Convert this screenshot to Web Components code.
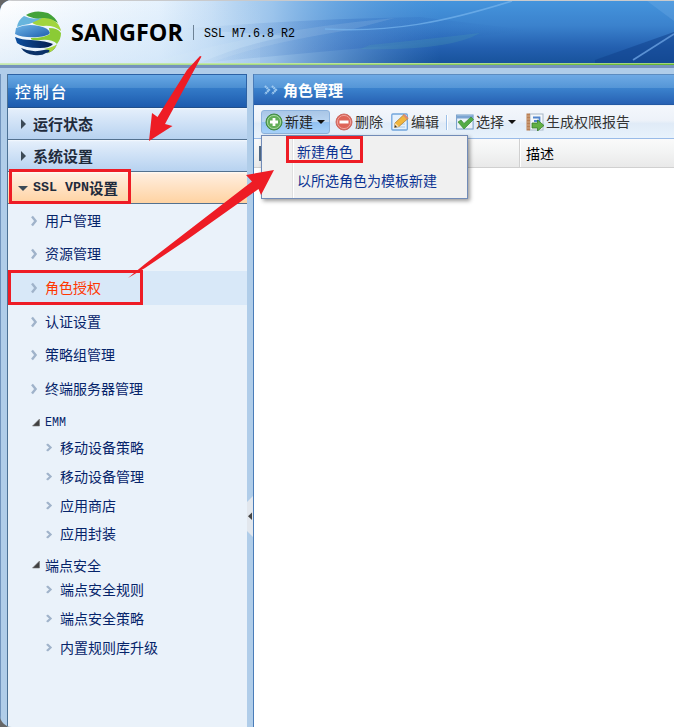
<!DOCTYPE html>
<html lang="zh-CN">
<head>
<meta charset="utf-8">
<title>SSL VPN 控制台</title>
<style>
html,body{margin:0;height:100%;overflow:hidden;background:#666}
body{font:14px "Liberation Sans","Noto Sans CJK SC",sans-serif}
</style>
</head>
<body>
<console-app></console-app>
<script>
const define = (name, html) => customElements.define(name, class extends HTMLElement {
  constructor() {
    super();
    const t = document.createElement('template');
    t.innerHTML = html;
    this.attachShadow({mode: 'open'}).append(t.content.cloneNode(true));
  }
});

define('brand-header', `
<style>
:host{display:block;position:relative;height:68px;box-sizing:border-box;overflow:hidden}
.bg{position:absolute;inset:0;width:674px;height:68px}
.row{position:relative;display:flex;align-items:center;height:64px}
.logo{width:48px;height:46px;margin:1px 0 0 14px;flex:none}
.name{font:bold 23.4px/30px "Open Sans","Noto Sans",sans-serif;color:#000;margin-left:9px;width:113px;white-space:nowrap}
.bar{width:1px;height:15px;background:#6d8296;margin-left:9px}
.ver{font:11.67px/16px "Liberation Mono",monospace;color:#000;margin-left:10px;white-space:pre;margin-top:3px;transform:scaleY(1.12)}
</style>
<svg class="bg" viewBox="0 0 674 68">
<defs>
<linearGradient id="h" x2="0" y2="1"><stop offset="0" stop-color="#4595dd"/><stop offset=".4" stop-color="#3b82cd"/><stop offset=".75" stop-color="#235faf"/><stop offset="1" stop-color="#17529b"/></linearGradient>
<linearGradient id="f" gradientUnits="userSpaceOnUse" x1="0" y1="0" x2="440" y2="0"><stop offset="0" stop-color="#fff"/><stop offset=".36" stop-color="#e6f2fd"/><stop offset=".48" stop-color="#c9e0f6"/><stop offset=".62" stop-color="#a5caee" stop-opacity=".9"/><stop offset=".76" stop-color="#82b3e4" stop-opacity=".6"/><stop offset="1" stop-color="#5a95d5" stop-opacity="0"/></linearGradient>
<linearGradient id="v" x2="0" y2="1"><stop offset="0" stop-color="#b9d6f2" stop-opacity="0"/><stop offset="1" stop-color="#b4d4f3" stop-opacity=".5"/></linearGradient>
<linearGradient id="w" x2="1" y2="0"><stop offset="0" stop-color="#2f6ec2" stop-opacity="0"/><stop offset=".5" stop-color="#2963bc" stop-opacity=".28"/><stop offset="1" stop-color="#2560b4" stop-opacity="0"/></linearGradient>
<linearGradient id="s" x2="1" y2="0"><stop offset="0" stop-color="#b4d4f3" stop-opacity=".5"/><stop offset="1" stop-color="#b4d4f3" stop-opacity="0"/></linearGradient>
<linearGradient id="g" x2="1" y2="0"><stop offset="0" stop-color="#c3e8ae"/><stop offset=".5" stop-color="#9bd66f"/><stop offset="1" stop-color="#66b82f"/></linearGradient>
</defs>
<rect width="674" height="64" fill="url(#h)"/>
<rect width="674" height="64" fill="url(#f)"/>
<rect width="260" height="63" fill="url(#v)" opacity=".7"/>
<path d="M180 29Q300 19 420 17L530 30Q440 42 330 51L200 63Q240 45 290 36Z" fill="url(#w)"/>
<path d="M150 63Q260 30 395 18L350 30Q260 44 210 63Z" fill="#dcecfa" opacity=".12"/>
<path d="M370 45Q420 40 480 33Q450 51 360 49Z" fill="#53a2ae" opacity=".22"/>
<path d="M325 29C390 33 445 22 512 1" fill="none" stroke="#7bb8ef" stroke-width="1.5" opacity=".65"/>
<path d="M595 60L674 32V63H595Z" fill="#10418d" opacity=".55"/>
<path d="M647 1H674V21Z" fill="#80b6ec" opacity=".25"/>
<path d="M633 60L674 34" stroke="#5a91d4" stroke-width="1.7"/>
<rect width="674" height="1" fill="#c9cacc"/>
<rect y="63" width="674" height="1" fill="#d8edcb"/>
<rect y="63.5" width="674" height="1.8" fill="url(#g)"/>
<rect y="65" width="674" height="3" fill="#7593bd"/>
</svg>
<div class="row">
<svg class="logo" viewBox="0 0 48 46">
<defs><linearGradient id="b" x2="1" y2="1"><stop offset="0" stop-color="#6eb6e8"/><stop offset="1" stop-color="#1f5fae"/></linearGradient>
<linearGradient id="n" x2="1" y2="0"><stop offset="0" stop-color="#0b4fa0"/><stop offset="1" stop-color="#061d4d"/></linearGradient></defs>
<path d="M12 5Q21-1 34 3Q41 7 44 13Q35 8 25 9Q17 8 12 5Z" fill="#43a238"/>
<path d="M28 8Q38 7 44 14Q47 19 47 21Q40 15 29 16Q19 15 18 12Q21 9 28 8Z" fill="#a2d53e"/>
<path d="M10 6Q18 10 28 8Q20 12 15 14Q8 15 3 17Q4 10 10 6Z" fill="#67b5dd"/>
<path d="M2 18Q13 13 25 16Q35 18 36 23Q34 26 24 27Q9 28 1 24Z" fill="url(#b)"/>
<path d="M35 18Q44 18 47 23Q47 29 43 34Q38 29 27 30Q16 31 17 28Q30 28 36 24Z" fill="#8bcb35"/>
<path d="M1 27Q8 30 17 30Q33 31 39 34Q36 38 26 38Q9 38 3 33Z" fill="url(#n)"/>
<path d="M7 38Q18 43 30 40Q41 38 43 35Q38 43 32 43Q28 46 20 45Q11 44 7 38Z" fill="#0a3167"/>
<path d="M30 39Q40 37 43 34Q41 41 32 44Q37 41 35 40Z" fill="#a8d63c"/>
</svg>
<span class="name">SANGFOR</span><span class="bar"></span><span class="ver">SSL M7.6.8 R2</span>
</div>`);

define('accordion-row', `
<style>
:host{display:flex;align-items:center;height:31px;border-bottom:1px solid #53718f;background:linear-gradient(#f5f9fe 0,#e3eefb 6%,#b7d2f0);color:#1f2b3c;font-weight:bold;font-size:15px;padding-left:9px;white-space:pre}
svg{width:12px;height:12px;flex:none;margin-right:4px}
:host([open]){background:linear-gradient(#fffaf5 0,#ffeddd 8%,#ffd3a2);font-size:14.5px}
:host([open]) svg{transform:rotate(90deg)}
</style>
<svg viewBox="0 0 12 12"><path d="M4 1L9 6L4 11Z" fill="#3c4a57"/></svg><slot></slot>`);

define('nav-item', `
<style>
:host{display:flex;align-items:center;height:33.6px;padding-left:23px;color:#06246a;white-space:nowrap}
:host([active]){background:#d8e8f8;color:#ff3700}
:host([sub]){height:28.8px;padding-left:38px}
svg{width:7px;height:12px;margin-right:7px;flex:none}
:host([sub]) svg{height:9px}
span{padding-bottom:2px}
</style>
<svg viewBox="0 0 7 12" preserveAspectRatio="none"><path d="M1 1.5L4.6 6L1 10.5" fill="none" stroke="#a0b3ca" stroke-width="2.4"/></svg><span><slot></slot></span>`);

define('nav-group', `
<style>
:host{display:block}
.head{display:flex;align-items:center;height:28px;padding:6px 0 0 24px;box-sizing:border-box;color:#06246a}
:host([late]) .head{height:26.8px;padding-top:5px}
svg{width:9px;height:9px;margin-right:4px;flex:none}
</style>
<div class="head"><svg viewBox="0 0 9 9"><path d="M.5 8L7.5 1V8Z" fill="#404040" stroke="#777" stroke-width=".6"/></svg><slot name="label"></slot></div>
<slot></slot>`);

define('side-panel', `
<style>
:host{display:block;width:240px;box-sizing:border-box;border-left:1px solid #4c7194;background:#eaf2fa;flex:none}
.title{height:34px;box-sizing:border-box;border:1px solid #2d62a4;border-left:0;border-bottom-color:#204f8b;color:#fff;font-weight:500;font-size:16px;letter-spacing:1.8px;display:flex;align-items:center;padding-left:7px;background:linear-gradient(#67a8e5 0,#4c8fd2 39%,#347bc8 41%,#1d5bae)}
.mono{font:11.67px "Liberation Mono",monospace;display:inline-block;transform:scaleY(1.12)}
.b{font-weight:bold;font-size:13.33px;transform:none}
</style>
<div class="title">控制台</div>
<accordion-row>运行状态</accordion-row>
<accordion-row>系统设置</accordion-row>
<accordion-row open><span class="mono b">SSL VPN</span>设置</accordion-row>
<nav-item>用户管理</nav-item>
<nav-item>资源管理</nav-item>
<nav-item active>角色授权</nav-item>
<nav-item>认证设置</nav-item>
<nav-item>策略组管理</nav-item>
<nav-item>终端服务器管理</nav-item>
<nav-group><span slot="label" class="mono">EMM</span>
<nav-item sub>移动设备策略</nav-item><nav-item sub>移动设备管理</nav-item><nav-item sub>应用商店</nav-item><nav-item sub>应用封装</nav-item></nav-group>
<nav-group late><span slot="label">端点安全</span>
<nav-item sub>端点安全规则</nav-item><nav-item sub>端点安全策略</nav-item><nav-item sub>内置规则库升级</nav-item></nav-group>`);

define('panel-splitter', `
<style>
:host{display:flex;width:6px;flex:none;background:#b0cde9;padding-top:422px;box-sizing:border-box;align-items:flex-start}
svg{display:block;width:6px;height:41px}
</style>
<svg viewBox="0 0 6 41"><path d="M6 0L0 6V35L6 41Z" fill="#e2e7ed"/><path d="M5 16.5V24L1 20.3Z" fill="#444"/></svg>`);

define('tool-button', `
<style>
:host{display:flex;align-items:center;height:24px;box-sizing:border-box;color:#333;white-space:nowrap}
:host([pressed]){width:69px;padding-left:3px;border:1px solid #8eb3dd;border-radius:3px;background:linear-gradient(#a9c6e6,#bad5f2 50%,#92c1f2 52%,#a7d1f9);color:#222}
::slotted(svg){width:18px;height:18px;flex:none;margin-right:2px}
span{padding-bottom:3px}
.caret{display:none;width:0;height:0;border:4px solid transparent;border-top-color:#111;border-bottom:0;margin-left:4px}
:host([menu]) .caret{display:block}
</style>
<slot name="icon"></slot><span><slot></slot></span><i class="caret"></i>`);

define('drop-menu', `
<style>
:host{display:block;position:absolute;left:7px;top:61px;width:207px;height:64px;box-sizing:border-box;border:1px solid #718bb7;background:linear-gradient(90deg,#f0f0f0 30px,#e0e0e0 30px 31px,#fff 31px 32px,#f0f0f0 32px);box-shadow:2px 2px 4px #0006;color:#0a3292;z-index:2}
div{height:28px;padding:1px 0 0 35px;display:flex;align-items:center}
</style>
<div>新建角色</div><div>以所选角色为模板新建</div>`);

define('role-panel', `
<style>
:host{display:block;position:relative;flex:1;min-width:0;border-left:1px solid #4a7cb8;background:#fff}
.title{height:31px;box-sizing:border-box;border-top:1px solid #5c8cc0;border-bottom:1px solid #2459a3;background:linear-gradient(#6eaae5 0,#5596d7 44%,#3b82cd 46%,#2761b3);color:#fff;font-weight:bold;font-size:15px;display:flex;align-items:center;padding-left:9px}
.title svg{width:15px;height:12px;margin-right:5px}
.tools{height:34px;box-sizing:border-box;border-top:1px solid #e9f0f8;border-bottom:1px solid #99bbe8;background:linear-gradient(#f4f7fc 0,#edf2f9 45%,#e0ebf7 55%,#e7f2fc);display:flex;align-items:center;padding-left:7px}
.tools>*{flex:none}
.sep{width:1px;height:15px;background:#9cc0e8;border-right:1px solid #fff;margin:0 8px 0 7px}
.head{display:flex;height:29px;box-sizing:border-box;border-bottom:1px solid #d0d0d0;background:linear-gradient(#fafafa 0,#f3f4f4 45%,#e9e9e9);color:#000}
.c1{width:266px;box-sizing:border-box;border-right:1px solid #d0d0d0;display:flex;align-items:center;padding-left:5px}
.c1 i{width:13px;height:15px;background:#526a86;border:0 solid}
.c2{display:flex;align-items:center;padding-left:5px;border-left:1px solid #fff}
</style>
<div class="title"><svg viewBox="0 0 15 12"><path d="M2 2L6 6L2 10M9 2L13 6L9 10" fill="none" stroke="#9fc9ef" stroke-width="2.2" stroke-dasharray="1.7 .5"/></svg>角色管理</div>
<div class="tools">
<tool-button pressed menu><svg slot="icon" viewBox="0 0 18 18"><circle cx="9" cy="9" r="8" fill="#62ad58" stroke="#3f8742"/><circle cx="9" cy="9" r="6.6" fill="none" stroke="#a4d69d"/><path d="M9 5V13M5 9H13" stroke="#fff" stroke-width="2.8"/></svg>新建</tool-button>
<tool-button style="margin-left:5px"><svg slot="icon" viewBox="0 0 18 18"><circle cx="9" cy="9" r="8" fill="#de6559" stroke="#cb6b63"/><circle cx="9" cy="9" r="6.6" fill="none" stroke="#efa19a"/><path d="M4.5 9H13.5" stroke="#fff" stroke-width="3"/></svg>删除</tool-button>
<tool-button style="margin-left:8px"><svg slot="icon" viewBox="0 0 18 18"><rect x=".8" y="1" width="15.5" height="16" rx="1" fill="#e5f1fd" stroke="#72a5dc" stroke-width="1.3"/><path d="M4 14H14M9 11H14" stroke="#a5c9ed"/><path d="M4 10L13 1.5L17 5.5L8 13.5L3.5 14.5Z" fill="#f1b63f" stroke="#a97628" stroke-width=".7"/><path d="M12 2.5L13.5 1L17.5 5L16 6.5Z" fill="#d98b76"/><path d="M3.5 14.5L4 10L8 13.5Z" fill="#f6dfb3"/><path d="M3.5 14.5L4 12L6 14Z" fill="#333"/></svg>编辑</tool-button>
<span class="sep"></span>
<tool-button menu><svg slot="icon" viewBox="0 0 18 18"><rect x=".6" y="2" width="16.5" height="14" fill="#edf3f9" stroke="#719bc8"/><path d="M1 2.5H17V5.5H1Z" fill="#7ba4d2"/><path d="M2 9L5 7L8 10.5L15 4L17.5 6.5L8 16Z" fill="#53ab46" stroke="#37893a" stroke-width=".7"/></svg>选择</tool-button>
<tool-button style="margin-left:10px"><svg slot="icon" viewBox="0 0 18 18"><rect x="4" y="1" width="13" height="16" fill="#f5f8fb" stroke="#a8b7c7"/><rect x=".5" y=".5" width="3.5" height="17" fill="#ba8055"/><path d="M.5 3H4M.5 6H4M.5 9H4M.5 12H4M.5 15H4" stroke="#e5c8ac" stroke-width=".6"/><path d="M7 4.500H13.500V8H8" stroke="#5386ce" stroke-width="1.8" fill="none"/><path d="M6 10H11.5V7L18 12.5L11.5 18V15H6Z" fill="#62b044" stroke="#367c2f" stroke-width=".8"/></svg>生成权限报告</tool-button>
</div>
<div class="head"><div class="c1"><i></i></div><div class="c2">描述</div></div>
<drop-menu></drop-menu>`);

define('guide-overlay', `
<style>:host{display:block;position:absolute;inset:0;z-index:5;pointer-events:none}svg{display:block}</style>
<svg width="674" height="727" viewBox="0 0 674 727">
<g fill="none" stroke="#ee1c25" stroke-width="3"><rect x="10.5" y="170.5" width="119" height="32"/><rect x="9.5" y="271.5" width="132" height="32"/><rect x="287.5" y="137.5" width="74" height="24"/></g>
<g fill="#ee1c25"><path d="M200 56L201.5 56.5L165 124L172.500 126L149 141L152 113L157.500 117L187 70Z"/><path d="M128 278L145 264L252 181.500L246 175L274 170L261 195L258.500 189L188 239L145 268Z"/></g>
</svg>`);

define('console-app', `
<style>
:host{display:block;position:relative;width:674px;height:727px;overflow:hidden;background:#b0cde9;border-radius:12px 0 0 12px}
.main{display:flex;height:653px;margin-top:6px;padding-left:6px;border-left:1px solid #7194bd}
</style>
<brand-header></brand-header>
<div class="main"><side-panel></side-panel><panel-splitter></panel-splitter><role-panel></role-panel></div>
<guide-overlay></guide-overlay>`);
</script>
</body>
</html>
